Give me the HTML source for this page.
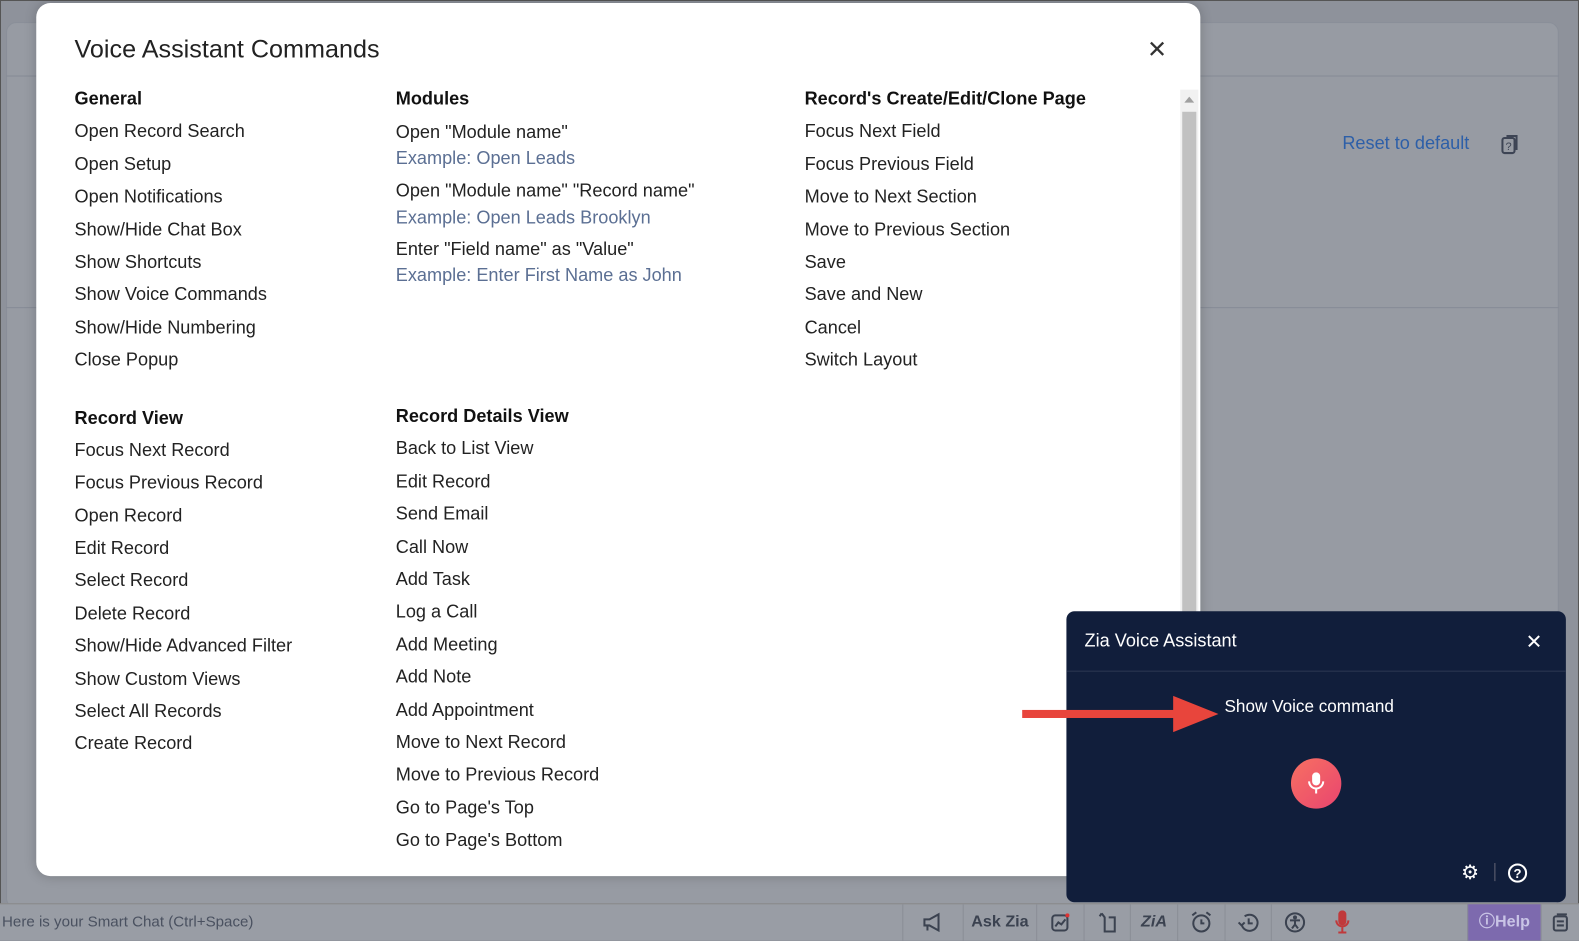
<!DOCTYPE html>
<html><head><style>
*{margin:0;padding:0;box-sizing:border-box}
body{width:1579px;height:940px;overflow:hidden;background:#8e929b;font-family:"Liberation Sans",sans-serif;position:relative}
#w{position:absolute;left:0;top:0;width:1568px;height:934px;transform:scale(1.007);transform-origin:0 0}
.frame{position:absolute;left:0;top:0;width:1568px;height:934px;border:1px solid #555;background:#8e929b}
.card{position:absolute;left:6px;top:22px;width:1542px;height:880px;background:#979ba3;border-radius:10px;border:1px solid #8a8f99}
.line{position:absolute;left:6px;width:1542px;height:1px;background:#868b96}
.reset{position:absolute;left:1333px;top:132px;color:#2d5fa8;font-size:18px}
.modal{position:absolute;left:36px;top:3px;width:1156px;height:867px;background:#fff;border-radius:14px;box-shadow:0 0 12px rgba(0,0,0,.2);overflow:hidden}
.modal h1{position:absolute;left:38px;top:32px;font-size:25px;font-weight:normal;color:#222}
.x{position:absolute;left:1103px;top:32px;font-size:24px;color:#333}
.col{position:absolute;font-size:18px;color:#222}
.col div{height:32.4px;line-height:32.4px;white-space:nowrap}
.col .h{font-weight:bold;color:#111}
.ab div{position:absolute;left:0;white-space:nowrap;height:auto;line-height:22px}
.col .e{color:#5b6f93}
.sb{position:absolute;left:1136px;top:86px;width:18px;height:790px;background:#f1f1f1}
.sb i{position:absolute;left:2px;top:22px;width:14px;height:780px;background:#c1c1c1}
.zia{position:absolute;left:1059px;top:607px;width:496px;height:289px;background:#111e3b;border-radius:8px;color:#fff}
.bar{position:absolute;left:0;top:897px;width:1568px;height:37px;background:#999da5;border-top:1px solid #888}
.bar span{position:absolute;top:0;height:36px;border-left:1px solid #8a8e96;color:#3b4250;font-size:16px;line-height:36px;text-align:center;display:flex;align-items:center;justify-content:center}
.bar svg{stroke:#3b4250;fill:none;stroke-width:2}
</style></head><body><div id="w">
<div class="frame"></div>
<div class="card"></div>
<div class="line" style="top:75px"></div>
<div class="line" style="top:305px"></div>
<div class="reset">Reset to default</div>
<svg style="position:absolute;left:1490px;top:132px" width="22" height="22"><rect x="2" y="5" width="12" height="15" rx="2" fill="none" stroke="#3d4454" stroke-width="2"/><path d="M6 3h10v14" fill="none" stroke="#3d4454" stroke-width="2"/><text x="5" y="17" font-size="11" fill="#3d4454" font-family="Liberation Sans">?</text></svg>
<div class="modal">
<h1>Voice Assistant Commands</h1>
<div class="x">✕</div>
<div class="col" style="left:38px;top:79px">
<div class="h">General</div><div>Open Record Search</div><div>Open Setup</div><div>Open Notifications</div><div>Show/Hide Chat Box</div><div>Show Shortcuts</div><div>Show Voice Commands</div><div>Show/Hide Numbering</div><div>Close Popup</div>
<div style="height:25px"></div>
<div class="h">Record View</div><div>Focus Next Record</div><div>Focus Previous Record</div><div>Open Record</div><div>Edit Record</div><div>Select Record</div><div>Delete Record</div><div>Show/Hide Advanced Filter</div><div>Show Custom Views</div><div>Select All Records</div><div>Create Record</div>
</div>
<div class="col ab" style="left:357px;top:0">
<div class="h" style="top:84px">Modules</div>
<div style="top:117px">Open "Module name"</div>
<div class="e" style="top:143px">Example: Open Leads</div>
<div style="top:175px">Open "Module name" "Record name"</div>
<div class="e" style="top:202px">Example: Open Leads Brooklyn</div>
<div style="top:233px">Enter "Field name" as "Value"</div>
<div class="e" style="top:259px">Example: Enter First Name as John</div>
</div>
<div class="col" style="left:357px;top:394px">
<div class="h">Record Details View</div><div>Back to List View</div><div>Edit Record</div><div>Send Email</div><div>Call Now</div><div>Add Task</div><div>Log a Call</div><div>Add Meeting</div><div>Add Note</div><div>Add Appointment</div><div>Move to Next Record</div><div>Move to Previous Record</div><div>Go to Page's Top</div><div>Go to Page's Bottom</div>
</div>
<div class="col" style="left:763px;top:79px">
<div class="h">Record's Create/Edit/Clone Page</div><div>Focus Next Field</div><div>Focus Previous Field</div><div>Move to Next Section</div><div>Move to Previous Section</div><div>Save</div><div>Save and New</div><div>Cancel</div><div>Switch Layout</div>
</div>
<div class="sb"><i></i><svg style="position:absolute;left:4px;top:7px" width="10" height="6"><path d="M0 6L5 0L10 6z" fill="#a0a0a0"/></svg></div>
</div>
<div class="zia">
<div style="position:absolute;left:18px;top:19px;font-size:18px">Zia Voice Assistant</div>
<div style="position:absolute;left:456px;top:18px;font-size:20px">✕</div>
<div style="position:absolute;left:0;top:59px;width:496px;height:1px;background:#2c3853"></div>
<div style="position:absolute;left:157px;top:85px;font-size:17px">Show Voice command</div>
<div style="position:absolute;left:223px;top:146px;width:50px;height:50px;border-radius:50%;background:linear-gradient(135deg,#f77062,#e9456f)"></div>
<svg style="position:absolute;left:238px;top:159px" width="20" height="24"><rect x="6" y="1" width="8" height="13" rx="4" fill="#fff"/><path d="M3 10a7 7 0 0 0 14 0M10 17v5" stroke="#fff" stroke-width="2" fill="none"/></svg>
<div style="position:absolute;left:392px;top:247px;font-size:20px">⚙</div>
<div style="position:absolute;left:425px;top:250px;width:1px;height:18px;background:#667"></div>
<svg style="position:absolute;left:438px;top:250px" width="20" height="20"><circle cx="10" cy="10" r="8.5" stroke="#fff" stroke-width="2" fill="none"/><text x="6" y="15" fill="#fff" font-size="13" font-weight="bold" font-family="Liberation Sans">?</text></svg>
</div>
<svg style="position:absolute;left:1015px;top:690px" width="195" height="40"><rect x="0" y="15" width="160" height="8" fill="#e8453c"/><path d="M150 1L195 19L150 37z" fill="#e8453c"/></svg>
<div class="bar">
<div style="position:absolute;left:2px;top:9px;font-size:15px;color:#4a5160">Here is your Smart Chat (Ctrl+Space)</div>
<span style="left:896px;width:60px"><svg width="22" height="20"><path d="M2 7h5l9-5v16l-9-5H2zM5 13v5"/></svg></span>
<span style="left:956px;width:73px;font-weight:bold">Ask Zia</span>
<span style="left:1029px;width:47px"><svg width="20" height="20"><rect x="2" y="3" width="15" height="15" rx="3"/><path d="M5 14l3-4 3 2 4-5"/><circle cx="17" cy="3" r="2" fill="#d33" stroke="none"/></svg></span>
<span style="left:1076px;width:46px"><svg width="20" height="22"><path d="M4 2l3 4v14h10V6h-6M4 2l-2 3"/></svg></span>
<span style="left:1122px;width:47px;font-weight:bold;font-style:italic">ZiA</span>
<span style="left:1169px;width:47px"><svg width="24" height="24"><circle cx="12" cy="13" r="8"/><path d="M12 9v4h3M3 5l4-3M21 5l-4-3"/></svg></span>
<span style="left:1216px;width:46px"><svg width="24" height="24"><path d="M5 14a8 8 0 1 0 3-8M2 12l3 3 3-3M12 8v5h4"/></svg></span>
<span style="left:1262px;width:47px"><svg width="24" height="24"><circle cx="12" cy="12" r="9"/><circle cx="12" cy="7" r="1" fill="#3b4250"/><path d="M7 10h10M12 10v4l-3 4M12 14l3 4"/></svg></span>
<span style="left:1309px;width:47px;border-left:none"><svg width="16" height="24" style="stroke:#c0393b"><rect x="5" y="1" width="6" height="13" rx="3" fill="#c0393b"/><path d="M2 10a6 6 0 0 0 12 0M8 17v5M4 22h8"/></svg></span>
<span style="left:1457px;width:73px;background:#7d6aae;color:#c9c4e6;font-weight:bold">ⓘHelp</span>
<span style="left:1530px;width:38px"><svg width="18" height="20"><rect x="2" y="4" width="13" height="14" rx="2"/><path d="M5 2h10M5 9h7M5 13h7"/></svg></span>
</div>
</div></body></html>
